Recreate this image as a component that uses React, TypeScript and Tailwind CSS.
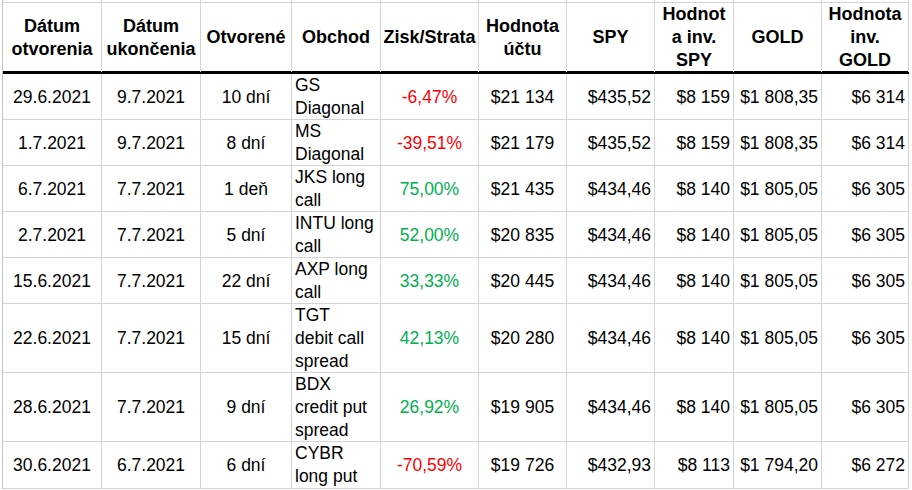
import React from 'react'

type Align = 'center' | 'left' | 'right'

interface Trade {
  opened: string
  closed: string
  days: string
  trade: string[]
  pnl: string
  win: boolean
  account: string
  spy: string
  spyValue: string
  gold: string
  goldValue: string
  h: string
}

const cols = 'grid grid-cols-[99px_99px_91px_89px_98px_88px_88px_79px_88px_87px]'

const headers: string[][] = [
  ['Dátum', 'otvorenia'],
  ['Dátum', 'ukončenia'],
  ['Otvorené'],
  ['Obchod'],
  ['Zisk/Strata'],
  ['Hodnota', 'účtu'],
  ['SPY'],
  ['Hodnot', 'a inv.', 'SPY'],
  ['GOLD'],
  ['Hodnota', 'inv.', 'GOLD'],
]

const align: Align[] = ['center', 'center', 'center', 'left', 'center', 'center', 'right', 'right', 'right', 'right']

const trades: Trade[] = [
  { opened: '29.6.2021', closed: '9.7.2021', days: '10 dní', trade: ['GS', 'Diagonal'], pnl: '-6,47%', win: false, account: '$21 134', spy: '$435,52', spyValue: '$8 159', gold: '$1 808,35', goldValue: '$6 314', h: 'h-[46px]' },
  { opened: '1.7.2021', closed: '9.7.2021', days: '8 dní', trade: ['MS', 'Diagonal'], pnl: '-39,51%', win: false, account: '$21 179', spy: '$435,52', spyValue: '$8 159', gold: '$1 808,35', goldValue: '$6 314', h: 'h-[46px]' },
  { opened: '6.7.2021', closed: '7.7.2021', days: '1 deň', trade: ['JKS long', 'call'], pnl: '75,00%', win: true, account: '$21 435', spy: '$434,46', spyValue: '$8 140', gold: '$1 805,05', goldValue: '$6 305', h: 'h-[46px]' },
  { opened: '2.7.2021', closed: '7.7.2021', days: '5 dní', trade: ['INTU long', 'call'], pnl: '52,00%', win: true, account: '$20 835', spy: '$434,46', spyValue: '$8 140', gold: '$1 805,05', goldValue: '$6 305', h: 'h-[46px]' },
  { opened: '15.6.2021', closed: '7.7.2021', days: '22 dní', trade: ['AXP long', 'call'], pnl: '33,33%', win: true, account: '$20 445', spy: '$434,46', spyValue: '$8 140', gold: '$1 805,05', goldValue: '$6 305', h: 'h-[46px]' },
  { opened: '22.6.2021', closed: '7.7.2021', days: '15 dní', trade: ['TGT', 'debit call', 'spread'], pnl: '42,13%', win: true, account: '$20 280', spy: '$434,46', spyValue: '$8 140', gold: '$1 805,05', goldValue: '$6 305', h: 'h-[69px]' },
  { opened: '28.6.2021', closed: '7.7.2021', days: '9 dní', trade: ['BDX', 'credit put', 'spread'], pnl: '26,92%', win: true, account: '$19 905', spy: '$434,46', spyValue: '$8 140', gold: '$1 805,05', goldValue: '$6 305', h: 'h-[69px]' },
  { opened: '30.6.2021', closed: '6.7.2021', days: '6 dní', trade: ['CYBR', 'long put'], pnl: '-70,59%', win: false, account: '$19 726', spy: '$432,93', spyValue: '$8 113', gold: '$1 794,20', goldValue: '$6 272', h: 'h-[47px]' },
]

function Cell({ lines, align, className = '' }: { lines: string[]; align: Align; className?: string }) {
  const justify =
    align === 'left' ? 'justify-start pl-[3px] text-left' : align === 'right' ? 'justify-end pr-[3px] text-right' : 'justify-center text-center'
  return (
    <div className={`flex items-center border-r border-[#d4d4d4] overflow-visible ${justify} ${className}`}>
      <div className="whitespace-nowrap">
        {lines.map((l, i) => (
          <div key={i}>{l}</div>
        ))}
      </div>
    </div>
  )
}

export default function App() {
  return (
    <div className="h-[490px] w-[912px] overflow-hidden bg-white text-black text-[17.5px] leading-[23px] font-['Liberation_Sans',Arial,sans-serif]">
      <div className="ml-[2px] w-fit border-l border-[#c4c4c4]">
        {/* sliver of the row above */}
        <div className={`${cols} h-[3px] border-b border-[#d4d4d4]`}>
          {headers.map((_, i) => (
            <div key={i} className="border-r border-[#d4d4d4]" />
          ))}
        </div>

        {/* header */}
        <div className={`${cols} h-[71px] border-b-[3px] border-black font-bold text-[18px]`}>
          {headers.map((h, i) => (
            <Cell key={i} lines={h} align="center" />
          ))}
        </div>

        {trades.map((t, r) => {
          const values: string[][] = [
            [t.opened],
            [t.closed],
            [t.days],
            t.trade,
            [t.pnl],
            [t.account],
            [t.spy],
            [t.spyValue],
            [t.gold],
            [t.goldValue],
          ]
          return (
            <div key={r} className={`${cols} ${t.h} border-b border-[#d4d4d4]`}>
              {values.map((v, i) => (
                <Cell
                  key={i}
                  lines={v}
                  align={align[i]}
                  className={i === 4 ? (t.win ? 'text-[#00b050]' : 'text-[#ff0000]') : ''}
                />
              ))}
            </div>
          )
        })}
      </div>
    </div>
  )
}
